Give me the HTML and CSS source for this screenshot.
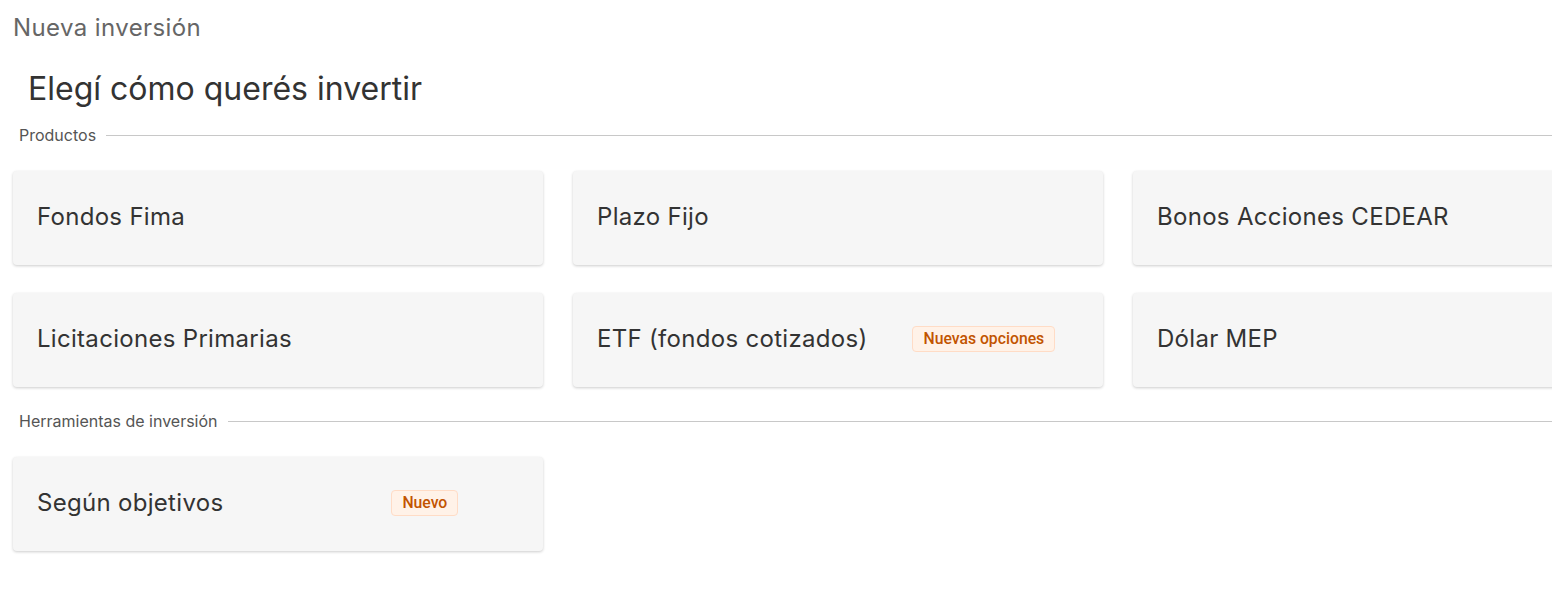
FILE: index.html
```html
<!DOCTYPE html>
<html lang="es">
<head>
<meta charset="utf-8">
<title>Nueva inversión</title>
<link rel="stylesheet" href="styles.css">
</head>
<body>
<div class="page">
  <div class="crumb">Nueva inversión</div>
  <h1 class="heading">Elegí cómo querés invertir</h1>

  <div class="section-label"><span>Productos</span><span class="rule"></span></div>
  <div class="grid">
    <div class="card"><span class="card-text">Fondos Fima</span></div>
    <div class="card"><span class="card-text">Plazo Fijo</span></div>
    <div class="card"><span class="card-text">Bonos Acciones CEDEAR</span></div>
    <div class="card"><span class="card-text">Licitaciones Primarias</span></div>
    <div class="card"><span class="card-text">ETF (fondos cotizados)</span><span class="badge badge-etf">Nuevas opciones</span></div>
    <div class="card"><span class="card-text">Dólar MEP</span></div>
  </div>

  <div class="section-label"><span>Herramientas de inversión</span><span class="rule"></span></div>
  <div class="grid">
    <div class="card"><span class="card-text">Según objetivos</span><span class="badge badge-obj">Nuevo</span></div>
  </div>
</div>
</body>
</html>
```

FILE: styles.css
```css
html, body {
  margin: 0;
  padding: 0;
  overflow: hidden;
  background: #ffffff;
}
body {
  font-family: Inter, "Noto Sans", sans-serif;
  color: #333333;
}
.page {
  padding: 14px 0 0 13px;
}
.crumb {
  font-size: 24px;
  letter-spacing: 0.4px;
  line-height: 28px;
  color: #666666;
}
.heading {
  margin: 28px 0 0 15px;
  font-size: 32px;
  line-height: 38px;
  font-weight: 400;
  color: #333333;
}
.section-label {
  display: flex;
  align-items: center;
  gap: 10px;
  margin: 17px 0 0 6px;
  font-size: 16px;
  line-height: 20px;
  color: #555555;
}
.section-label .rule {
  flex: 1;
  height: 1px;
  background: #c8c8c8;
}
.grid {
  display: grid;
  grid-template-columns: repeat(3, 530px);
  column-gap: 30px;
  row-gap: 28px;
  margin-top: 26px;
  margin-bottom: 24px;
}
.card {
  height: 94px;
  background: #f6f6f6;
  border-radius: 4px;
  box-shadow: 0 1px 3px rgba(0, 0, 0, 0.2);
  display: flex;
  align-items: center;
  padding: 0 24px 3px;
  box-sizing: border-box;
}
.card-text {
  font-size: 24px;
  letter-spacing: 0.3px;
  color: #333333;
}
.badge {
  font-family: Roboto, "Liberation Sans", sans-serif;
  font-size: 15.75px;
  font-weight: 500;
  line-height: 24px;
  padding: 0 10px;
  color: #c25400;
  background: #fff2e8;
  border: 1px solid #ffdcc6;
  border-radius: 4px;
}
.badge-etf {
  margin-left: 45px;
}
.badge-obj {
  margin-left: 168px;
}
```
